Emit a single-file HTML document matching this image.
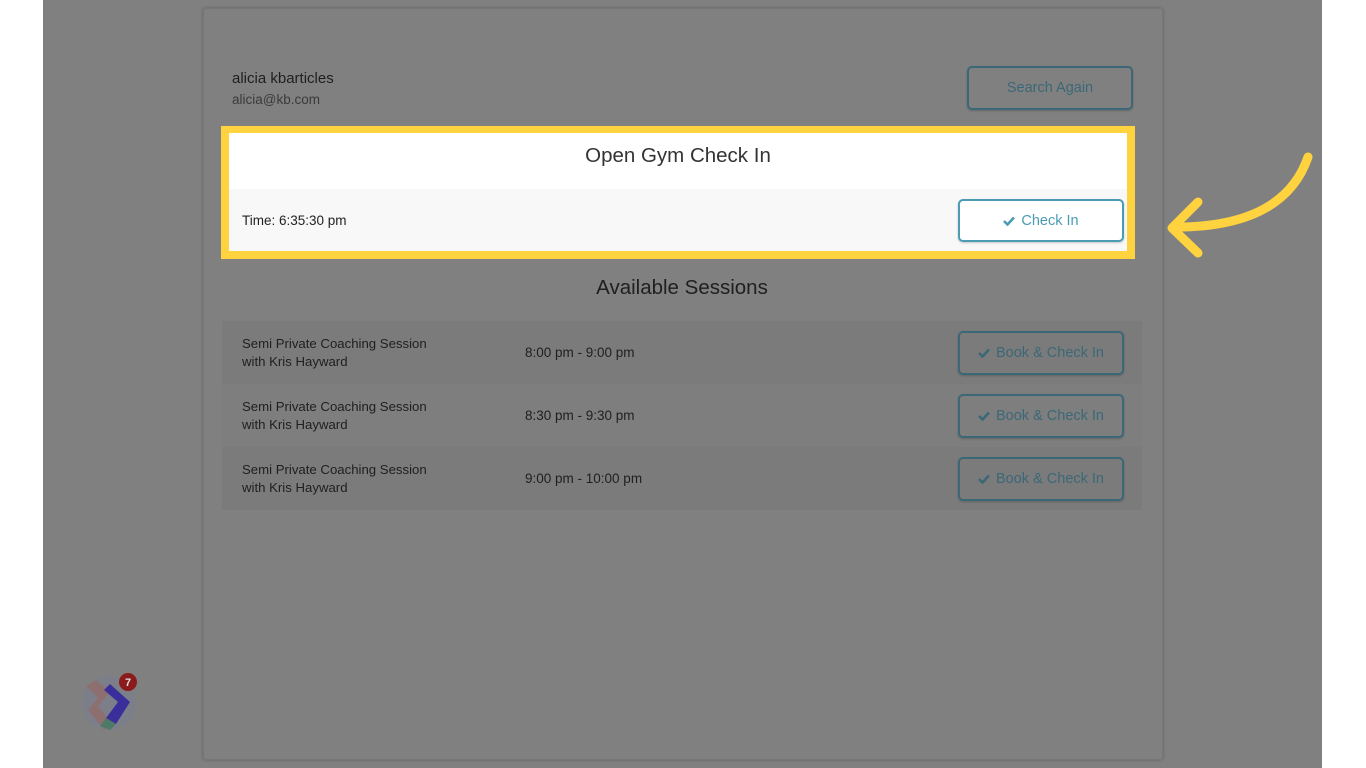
<!DOCTYPE html>
<html><head><meta charset="utf-8"><style>
*{box-sizing:border-box;margin:0;padding:0}
body{width:1366px;height:768px;background:#fff;font-family:"Liberation Sans",Arial,sans-serif;position:relative;overflow:hidden}
.bg{position:absolute;left:43px;top:0;width:1279px;height:768px;background:#808080}
.card{position:absolute;left:203px;top:8px;width:960px;height:752px;background:#808080;border:1px solid #777;box-shadow:0 0 3px rgba(0,0,0,.25);border-radius:3px}
.abs{position:absolute}
.name{left:232px;top:70px;font-size:15px;color:#1f1f1f}
.email{left:232px;top:92px;font-size:13.5px;color:#3a3a3a}
.btn{position:absolute;border:2px solid #3b6877;border-radius:5px;color:#3b6877;font-size:14.5px;display:flex;align-items:center;justify-content:center;box-shadow:0 1px 2px rgba(0,0,0,.2)}
.hl{position:absolute;left:221px;top:126px;width:914px;height:133px;background:#ffd23f}
.hlin{position:absolute;left:229px;top:133px;width:898px;height:118px;background:#fff}
.hlrow{position:absolute;left:229px;top:189px;width:898px;height:62px;background:#f8f8f8}
.row{position:absolute;left:222px;width:920px;height:63px}
.rt{position:absolute;left:20px;top:14px;font-size:13.2px;line-height:18px;color:#1f1f1f}
.tm{position:absolute;left:303px;top:24px;font-size:13.5px;color:#1f1f1f}
.chk{display:inline-block;margin-right:6px;width:12px;height:10px}
</style></head><body>
<div class="bg"></div>
<div class="card"></div>
<div class="abs name">alicia kbarticles</div>
<div class="abs email">alicia@kb.com</div>
<div class="btn" style="left:967px;top:66px;width:166px;height:44px">Search Again</div>
<div class="hl"></div><div class="hlin"></div><div class="hlrow"></div>
<div class="abs" style="left:229px;width:898px;top:144px;text-align:center;font-size:20.5px;color:#333">Open Gym Check In</div>
<div class="abs" style="left:242px;top:213px;font-size:13.5px;color:#222">Time: 6:35:30 pm</div>
<div class="btn" style="left:958px;top:199px;width:166px;height:43px;border-color:#4a9cb5;color:#4a9cb5;background:#fff"><svg class="chk" viewBox="0 0 12 10"><path d="M1 5 L4.5 8.5 L11 1.5" fill="none" stroke="currentColor" stroke-width="2.6"/></svg>Check In</div>
<div class="abs" style="left:222px;width:920px;top:276px;text-align:center;font-size:20.5px;color:#1f1f1f">Available Sessions</div>
<div class="row" style="top:321px;background:#7b7b7b"><div class="rt">Semi Private Coaching Session<br>with Kris Hayward</div><div class="tm">8:00 pm - 9:00 pm</div></div>
<div class="row" style="top:384px;background:#7e7e7e"><div class="rt">Semi Private Coaching Session<br>with Kris Hayward</div><div class="tm">8:30 pm - 9:30 pm</div></div>
<div class="row" style="top:447px;background:#7b7b7b"><div class="rt">Semi Private Coaching Session<br>with Kris Hayward</div><div class="tm">9:00 pm - 10:00 pm</div></div>
<div class="btn" style="left:958px;top:331px;width:166px;height:44px"><svg class="chk" viewBox="0 0 12 10"><path d="M1 5 L4.5 8.5 L11 1.5" fill="none" stroke="currentColor" stroke-width="2.6"/></svg>Book &amp; Check In</div>
<div class="btn" style="left:958px;top:394px;width:166px;height:44px"><svg class="chk" viewBox="0 0 12 10"><path d="M1 5 L4.5 8.5 L11 1.5" fill="none" stroke="currentColor" stroke-width="2.6"/></svg>Book &amp; Check In</div>
<div class="btn" style="left:958px;top:457px;width:166px;height:44px"><svg class="chk" viewBox="0 0 12 10"><path d="M1 5 L4.5 8.5 L11 1.5" fill="none" stroke="currentColor" stroke-width="2.6"/></svg>Book &amp; Check In</div>
<svg class="abs" style="left:1160px;top:145px" width="160" height="120" viewBox="0 0 160 120">
<path d="M148 12 C135 50 100 82 16 82" fill="none" stroke="#ffd23f" stroke-width="9" stroke-linecap="round"/>
<path d="M38 57 L12 83 L38 108" fill="none" stroke="#ffd23f" stroke-width="9" stroke-linecap="round" stroke-linejoin="round"/>
</svg>
<svg class="abs" style="left:80px;top:672px" width="62" height="62" viewBox="0 0 62 62">
<circle cx="29" cy="31" r="27" fill="#7c7f8a"/>
<path d="M16 8 L30 20 L18 34 L32 52 L24 58 L8 38 L18 26 L6 14Z" fill="#8e6f6f"/>
<path d="M30 12 L50 30 L36 52 L26 46 L38 30 L24 18Z" fill="#3a2f9a"/>
<path d="M26 46 L36 52 L30 58 L20 54Z" fill="#4d7a66"/>
<circle cx="48" cy="10" r="9" fill="#8b1a1a"/>
<text x="48" y="14" font-size="11" font-weight="bold" fill="#ddd" text-anchor="middle" font-family="Liberation Sans">7</text>
</svg>
</body></html>
